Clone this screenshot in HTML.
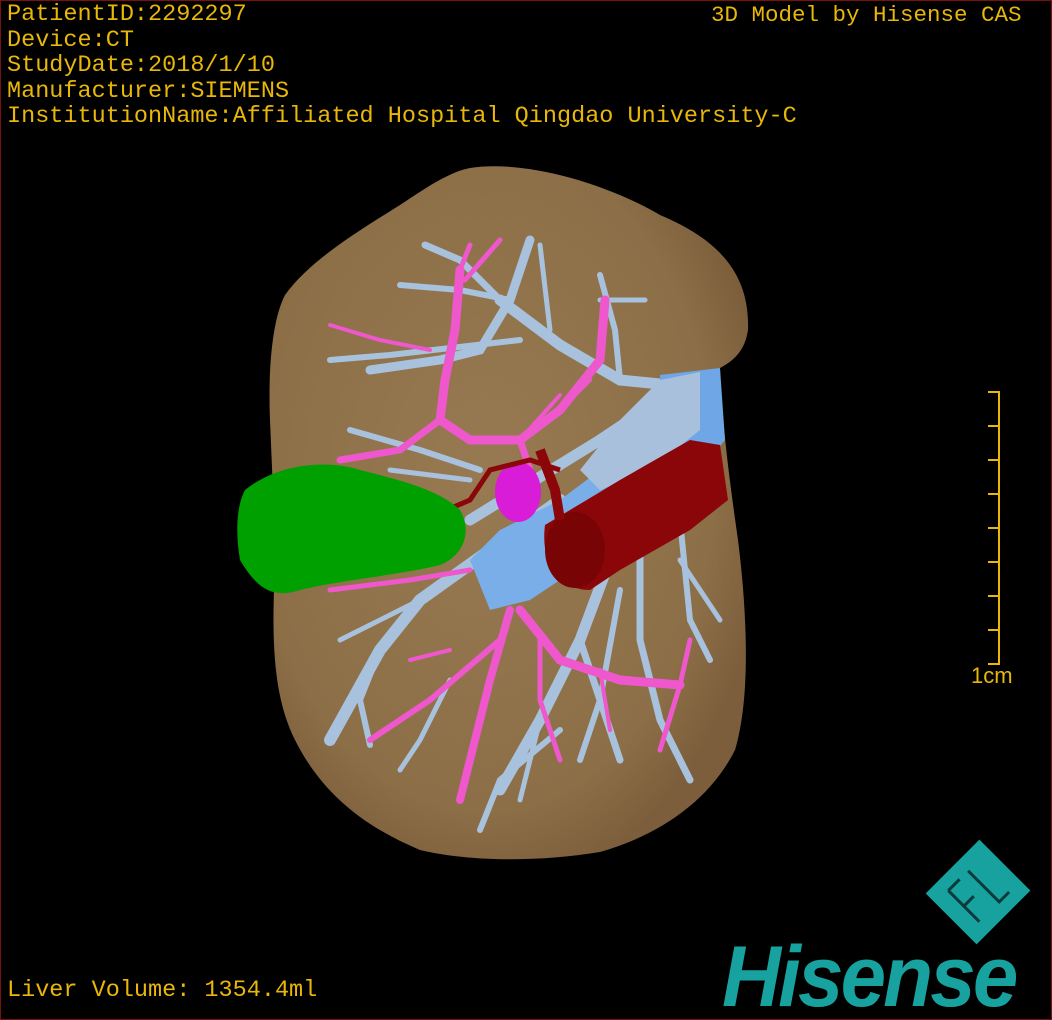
<!DOCTYPE html>
<html><head><meta charset="utf-8"><style>
html,body{margin:0;padding:0;background:#000;}
.f{position:relative;width:1052px;height:1020px;overflow:hidden;background:#000;}
.b{position:absolute;left:0;top:0;width:1050px;height:1018px;border:1px solid #7a1010;}
.t{position:absolute;font-family:"Liberation Mono",monospace;font-size:23.5px;color:#e8b70a;line-height:25.5px;white-space:pre;}
svg{position:absolute;left:0;top:0;}
</style></head><body><div class="f">
<svg width="1052" height="1020" viewBox="0 0 1052 1020">
<defs>
<radialGradient id="lv" cx="0.45" cy="0.45" r="0.6"><stop offset="0" stop-color="#987a52"/><stop offset="0.8" stop-color="#8c6e47"/><stop offset="1" stop-color="#7c5e3c"/></radialGradient>
</defs>
<path d="M470,168 C520,160 600,180 660,215 C720,240 750,275 748,330 C745,350 735,360 720,368 C722,420 728,470 738,540 C748,620 750,700 735,750 C710,800 660,835 600,852 C540,862 470,862 420,850 C360,825 320,790 295,740 C275,700 272,650 274,590 C275,520 272,470 270,420 C268,370 272,320 285,295 C310,260 360,230 400,205 C430,185 450,172 470,168 Z" fill="url(#lv)"/>
<g stroke="#a8c2de" stroke-linecap="round" fill="none">
<path d="M530,240 L510,300 L480,350 L440,360 L370,370" stroke-width="9"/>
<path d="M510,300 L460,290 L400,285" stroke-width="6"/>
<path d="M425,245 L460,260 L500,300" stroke-width="7"/>
<path d="M500,300 L560,345 L620,380 L670,385" stroke-width="11"/>
<path d="M600,275 L615,330 L620,380" stroke-width="6"/>
<path d="M600,300 L645,300" stroke-width="5"/>
<path d="M540,245 L550,330" stroke-width="5"/>
<path d="M330,360 L390,355 L520,340" stroke-width="6"/>
<path d="M350,430 L420,450 L480,470" stroke-width="6"/>
<path d="M390,470 L470,480" stroke-width="5"/>
<path d="M470,520 L600,440 L660,400" stroke-width="11"/>
<path d="M560,500 L420,600 L380,650 L330,740" stroke-width="12"/>
<path d="M440,590 L400,610 L340,640" stroke-width="5"/>
<path d="M380,650 L360,700 L370,745" stroke-width="6"/>
<path d="M610,560 L580,640 L540,720 L500,790" stroke-width="11"/>
<path d="M540,720 L520,800" stroke-width="5"/>
<path d="M580,640 L600,700 L620,760" stroke-width="7"/>
<path d="M640,540 L640,640 L660,720 L690,780" stroke-width="7"/>
<path d="M680,520 L690,620 L710,660" stroke-width="6"/>
<path d="M680,560 L720,620" stroke-width="5"/>
<path d="M620,590 L600,700 L580,760" stroke-width="6"/>
<path d="M560,730 L500,780 L480,830" stroke-width="6"/>
<path d="M450,680 L420,740 L400,770" stroke-width="5"/>
</g>
<g stroke="#ee58cc" stroke-linecap="round" fill="none">
<path d="M460,270 L455,330 L445,380 L440,420 L470,440 L520,440 L560,410 L600,360 L605,300" stroke-width="9"/>
<path d="M460,270 L470,245 M465,280 L500,240" stroke-width="5"/>
<path d="M440,420 L400,450 L340,460" stroke-width="7"/>
<path d="M330,325 L380,340 L430,350" stroke-width="4"/>
<path d="M560,410 L590,380 M520,440 L560,395" stroke-width="4"/>
<path d="M520,440 L530,470" stroke-width="7"/>
<path d="M330,590 L410,580 L470,570" stroke-width="5"/>
<path d="M510,610 L490,680 L470,760 L460,800" stroke-width="8"/>
<path d="M520,610 L560,660 L620,680 L680,685" stroke-width="9"/>
<path d="M500,640 L430,700 L370,740" stroke-width="6"/>
<path d="M540,640 L540,700 L560,760" stroke-width="5"/>
<path d="M680,685 L690,640 M680,685 L660,750" stroke-width="5"/>
<path d="M600,670 L610,730" stroke-width="4"/>
<path d="M410,660 L450,650" stroke-width="4"/>
</g>
<path d="M470,560 L500,530 L560,500 L600,470 L660,430 L700,420 L705,470 L650,510 L590,560 L530,600 L490,610 Z" fill="#7aaee8"/>
<path d="M660,375 L720,368 L725,440 L700,470 L660,430 Z" fill="#6fa6e6"/>
<path d="M580,470 L620,420 L660,380 L700,372 L700,430 L650,470 L600,490 Z" fill="#a8c0dc"/>
<path d="M545,525 L620,480 L690,440 L720,445 L728,500 L690,530 L620,570 L590,590 C560,590 540,565 545,525 Z" fill="#8a0608"/>
<ellipse cx="575" cy="550" rx="30" ry="38" fill="#780406"/>
<path d="M540,450 L555,490 L560,520" stroke="#8a0608" stroke-width="10" fill="none"/>
<ellipse cx="518" cy="492" rx="23" ry="30" fill="#d81cd8"/>
<path d="M435,515 L470,500 L490,470 L530,460 L560,470" stroke="#8a0608" stroke-width="5" fill="none"/>
<path d="M245,490 C280,462 330,460 360,470 C400,480 440,490 460,510 C472,530 465,555 440,565 C400,575 340,580 300,590 C270,600 255,585 240,560 C235,530 237,505 245,490 Z" fill="#00a000"/>
<g transform="translate(978,892) rotate(-45)">
<rect x="-38" y="-36" width="76" height="72" fill="#17a2a0"/>
<path d="M-20,-22 L-20,22 M-20,-22 L-4,-22 M-20,0 L-6,0 M8,-22 L8,22 L22,22" stroke="#0a3a3a" stroke-width="3" fill="none"/>
</g>
</svg>
<div class="b"></div>
<div class="t" style="left:7px;top:2px;">PatientID:2292297
Device:CT
StudyDate:2018/1/10
Manufacturer:SIEMENS
InstitutionName:Affiliated Hospital Qingdao University-C</div>
<div class="t" style="left:711px;top:3px;font-size:22.5px;">3D Model by Hisense CAS</div>
<div class="t" style="left:7px;top:978px;">Liver Volume: 1354.4ml</div>
<div style="position:absolute;left:998px;top:391px;width:2px;height:273px;background:#e8b70a"></div>
<div style="position:absolute;left:988px;top:391px;width:12px;height:274px;background:repeating-linear-gradient(#e8b70a 0 2px,transparent 2px 34px)"></div>
<div class="t" style="left:971px;top:663px;font-family:'Liberation Sans',sans-serif;font-size:22px;">1cm</div>
<div style="position:absolute;left:722px;top:934px;font-family:'Liberation Sans',sans-serif;font-weight:bold;font-style:italic;font-size:86px;color:#17a2a0;letter-spacing:-3px;line-height:86px;transform:scaleX(0.95);transform-origin:left;">Hisense</div>
</div></body></html>
